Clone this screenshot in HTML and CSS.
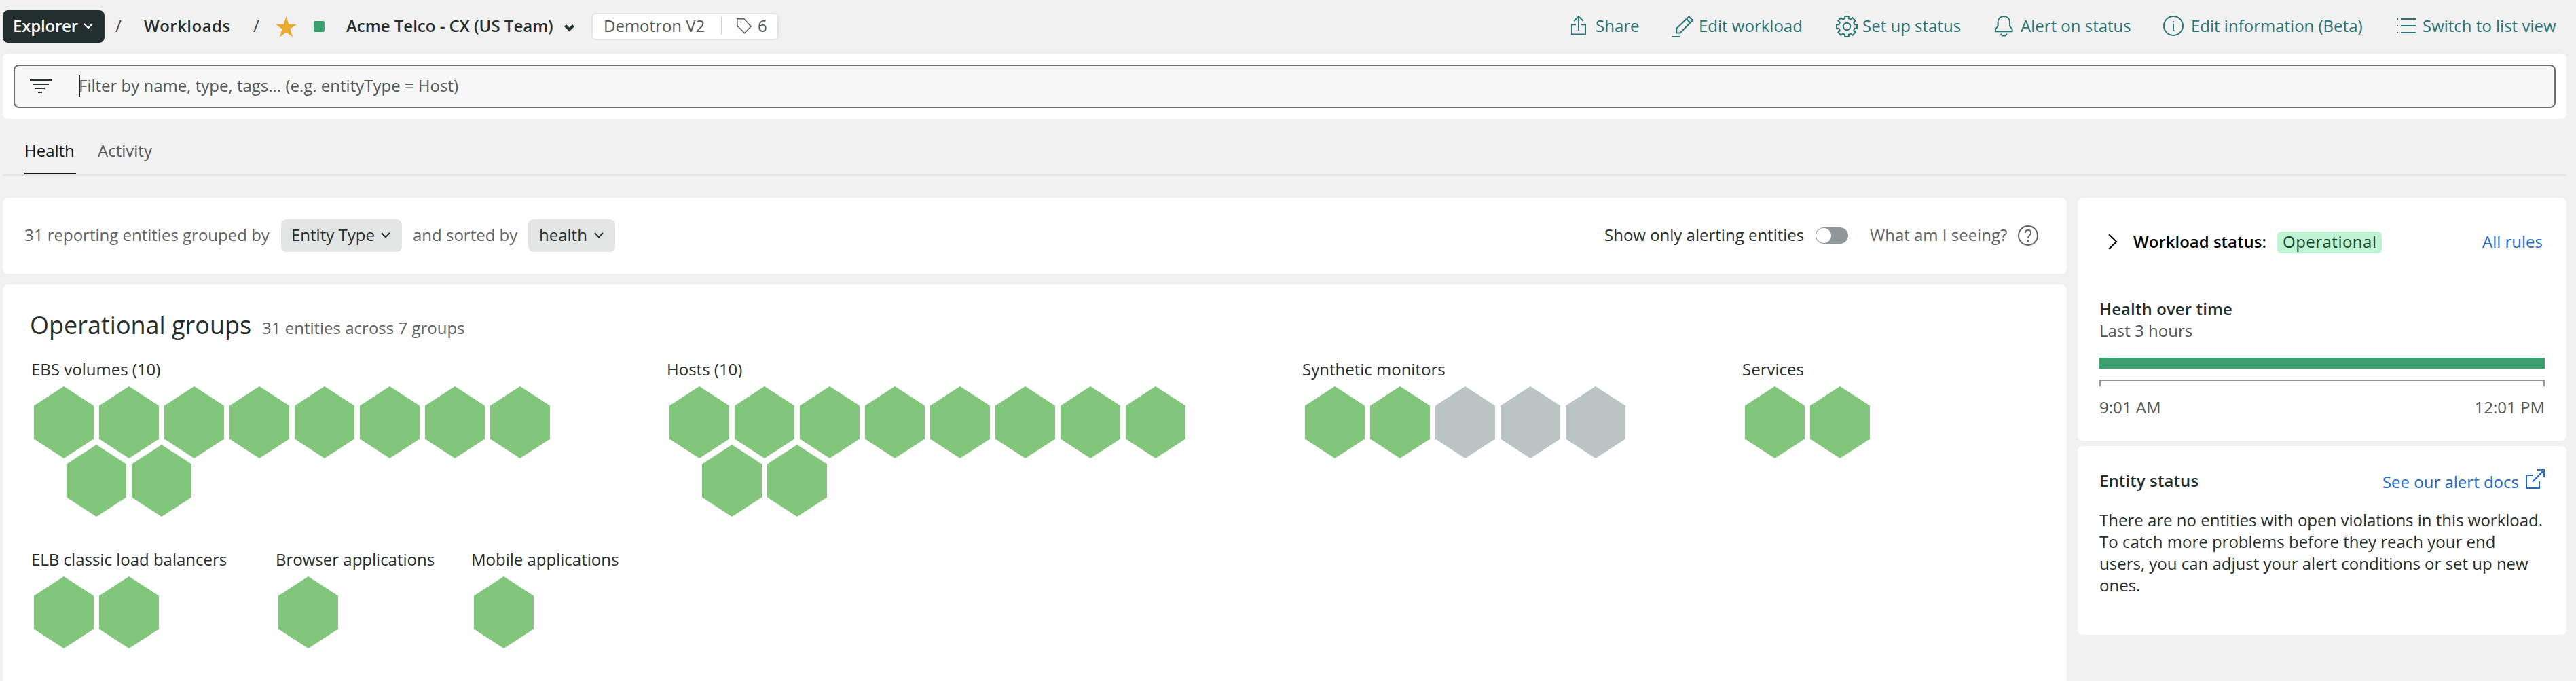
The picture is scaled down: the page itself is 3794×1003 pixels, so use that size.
FILE: index.html
```
<!DOCTYPE html>
<html lang="en">
<head>
<meta charset="utf-8">
<title>Workloads - Acme Telco - CX (US Team)</title>
<link rel="stylesheet" href="styles.css">
</head>
<body>
<svg class="defs" width="0" height="0" aria-hidden="true">
  <symbol id="hex" viewBox="0 0 88 106"><path d="M44 0 88 28.5V77.5L44 106 0 77.5V28.5Z" fill="currentColor"/></symbol>
</svg>

<header class="topbar">
  <button class="explorer"><span>Explorer</span><svg class="explorer-caret" width="14" height="9" viewBox="0 0 14 9"><path d="M1 1 7 7.2 13 1"/></svg></button>
  <span class="slash slash-first">/</span>
  <a class="crumb">Workloads</a>
  <span class="slash slash-second">/</span>
  <svg class="star" width="31" height="31" viewBox="0 0 31 31"><path d="M15.5 0 19.2 11.8H31L21.4 18.8 25.3 30.6 15.5 23.4 5.7 30.6 9.6 18.8 0 11.8H11.8Z" fill="#e9ab31"/></svg>
  <span class="status-dot"></span>
  <h1 class="title">Acme Telco - CX (US Team)</h1>
  <svg class="title-caret" width="15" height="12" viewBox="0 0 15 12"><path d="M1.5 2.5 7.5 8.5 13.5 2.5" fill="none" stroke="#262d2d" stroke-width="4.2"/></svg>
  <div class="meta">
    <span class="account">Demotron V2</span>
    <span class="tags"><svg width="22" height="24" viewBox="0 0 22 24" fill="none" stroke="#565b5b" stroke-width="1.5"><path d="M.9 1.8H11L21 13 11.5 22.8.9 12Z"/><path d="M5.5 6.5h1.6" stroke-width="1.6"/></svg>6</span>
  </div>
  <nav class="actions">
    <a class="action share"><svg width="22" height="30" viewBox="0 0 22 30"><path d="M7 13.2H1V27.5H21V13.2H15M11 22V1.5M4.2 8 11 1.2 17.8 8"/></svg>Share</a>
    <a class="action edit"><svg width="33" height="32" viewBox="0 0 33 32"><path d="M0 31H12.5M7.2 25.5V19L25.5 1.5 31 7 12.5 25.5ZM22 5 27.8 10.6"/></svg>Edit workload</a>
    <a class="action setup"><svg width="32" height="32" viewBox="0 0 32 32"><path d="M13.2 1H18.8V4.4L21.9 5.6 24.5 3.1 28.6 7.4 26.2 10 27.5 13.2H31V18.8H27.5L26.2 22 28.6 24.6 24.5 28.9 21.9 26.4 18.8 27.6V31H13.2V27.6L10.1 26.4 7.5 28.9 3.4 24.6 5.8 22 4.5 18.8H1V13.2H4.5L5.8 10 3.4 7.4 7.5 3.1 10.1 5.6 13.2 4.4Z"/><circle cx="16" cy="16" r="5.2"/></svg>Set up status</a>
    <a class="action alert"><svg width="27" height="31" viewBox="0 0 27 31"><path d="M1 23.2V20L4.6 15.5V9.8C4.6 4.4 8.4 1 13.3 1S22 4.4 22 9.8V15.5L25.6 20V23.2ZM8.8 26.6C9.6 28.6 11.2 29.6 13.3 29.6S17 28.6 17.8 26.6"/></svg>Alert on status</a>
    <a class="action info"><svg width="30" height="30" viewBox="0 0 30 30"><circle cx="15" cy="15" r="14"/><path d="M15 12V22M15 8V10.2"/></svg>Edit information (Beta)</a>
    <a class="action list"><svg width="28" height="22" viewBox="0 0 28 22"><path d="M6 1H28M6 11H28M6 21H28M0 1H2M0 11H2M0 21H2"/></svg>Switch to list view</a>
  </nav>
</header>

<section class="filter-card">
  <div class="filter-box">
    <svg width="32" height="20" viewBox="0 0 32 20"><path d="M0 1H32M4 7H28M8 13H22M12 19H18" stroke="#2a3434" stroke-width="2"/></svg>
    <span class="text-caret"></span>
    <span class="placeholder">Filter by name, type, tags... (e.g. entityType = Host)</span>
  </div>
</section>

<nav class="tabs">
  <a class="tab active">Health</a>
  <a class="tab">Activity</a>
</nav>

<main class="content">
  <div class="main-col">
    <section class="card toolbar">
      <span class="grouped">31 reporting entities grouped by</span>
      <button class="pill"><span>Entity Type</span><svg width="14" height="9" viewBox="0 0 14 9"><path d="M1 1 7 7.2 13 1"/></svg></button>
      <span class="sorted">and sorted by</span>
      <button class="pill pill-sort"><span>health</span><svg width="14" height="9" viewBox="0 0 14 9"><path d="M1 1 7 7.2 13 1"/></svg></button>
      <div class="toolbar-right">
        <span class="only">Show only alerting entities</span>
        <span class="toggle"><i></i></span>
        <span class="what">What am I seeing?</span>
        <svg width="30" height="30" viewBox="0 0 30 30" fill="none" stroke="#5e6363" stroke-width="2"><circle cx="15" cy="15" r="14"/><path d="M10.8 11.2C10.8 8.6 12.5 7 15 7S19.2 8.6 19.2 11C19.2 14.4 15 14.4 15 19M15 21.6V24"/></svg>
      </div>
    </section>

    <section class="card groups-card">
      <div class="groups-head"><h2>Operational groups</h2><span>31 entities across 7 groups</span></div>
      <div class="group-row">
        <div class="group w-xl">
          <h3>EBS volumes (10)</h3>
          <div class="hexes"><svg><use href="#hex"/></svg><svg><use href="#hex"/></svg><svg><use href="#hex"/></svg><svg><use href="#hex"/></svg><svg><use href="#hex"/></svg><svg><use href="#hex"/></svg><svg><use href="#hex"/></svg><svg><use href="#hex"/></svg></div>
          <div class="hexes shifted"><svg><use href="#hex"/></svg><svg><use href="#hex"/></svg></div>
        </div>
        <div class="group w-xl">
          <h3>Hosts (10)</h3>
          <div class="hexes"><svg><use href="#hex"/></svg><svg><use href="#hex"/></svg><svg><use href="#hex"/></svg><svg><use href="#hex"/></svg><svg><use href="#hex"/></svg><svg><use href="#hex"/></svg><svg><use href="#hex"/></svg><svg><use href="#hex"/></svg></div>
          <div class="hexes shifted"><svg><use href="#hex"/></svg><svg><use href="#hex"/></svg></div>
        </div>
        <div class="group w-lg">
          <h3>Synthetic monitors</h3>
          <div class="hexes"><svg><use href="#hex"/></svg><svg><use href="#hex"/></svg><svg class="off"><use href="#hex"/></svg><svg class="off"><use href="#hex"/></svg><svg class="off"><use href="#hex"/></svg></div>
        </div>
        <div class="group">
          <h3>Services</h3>
          <div class="hexes"><svg><use href="#hex"/></svg><svg><use href="#hex"/></svg></div>
        </div>
      </div>
      <div class="group-row group-row-last">
        <div class="group w-md">
          <h3>ELB classic load balancers</h3>
          <div class="hexes"><svg><use href="#hex"/></svg><svg><use href="#hex"/></svg></div>
        </div>
        <div class="group w-sm">
          <h3>Browser applications</h3>
          <div class="hexes"><svg><use href="#hex"/></svg></div>
        </div>
        <div class="group">
          <h3>Mobile applications</h3>
          <div class="hexes"><svg><use href="#hex"/></svg></div>
        </div>
      </div>
    </section>
  </div>

  <aside class="side">
    <section class="card status-card">
      <div class="status-row">
        <svg width="14" height="24" viewBox="0 0 14 24"><path d="M1.2 1.2 12.2 12 1.2 22.8" fill="none" stroke="#000" stroke-width="2"/></svg>
        <strong>Workload status:</strong>
        <span class="badge">Operational</span>
        <a class="link">All rules</a>
      </div>
      <h4>Health over time</h4>
      <p class="range">Last 3 hours</p>
      <div class="health-bar"></div>
      <div class="axis"></div>
      <div class="axis-labels"><span>9:01 AM</span><span>12:01 PM</span></div>
    </section>
    <section class="card entity-card">
      <div class="entity-head">
        <h4>Entity status</h4>
        <a class="link docs">See our alert docs<svg width="28" height="29" viewBox="0 0 28 29" fill="none" stroke="#1e69c4" stroke-width="2"><path d="M10 9H1V28H20V18M10 18.5 27 1.2M17 1H27V12"/></svg></a>
      </div>
      <p class="note">There are no entities with open violations in this workload.<br>To catch more problems before they reach your end<br>users, you can adjust your alert conditions or set up new<br>ones.</p>
    </section>
  </aside>
</main>
</body>
</html>
```
FILE: styles.css
```
* { box-sizing: border-box; }
body {
  margin: 0;
  background: #f1f1f1;
  color: #262d2d;
  font: 24px/32px "Open Sans", "Noto Sans", sans-serif;
  white-space: nowrap;
}
h1, h2, h3, h4, p { margin: 0; font-size: 24px; font-weight: 400; }
button { border: 0; margin: 0; font: inherit; color: inherit; text-align: left; }
svg { display: block; flex: none; }
.defs { display: none; }
.card { background: #fff; border-radius: 8px; }

/* Header */
.topbar { display: flex; align-items: center; height: 79px; padding: 0 14px 3px 4px; }
.topbar > * { flex: none; }
.explorer {
  display: flex; align-items: center; width: 150px; height: 48px; margin-top: 2px;
  padding: 0 17px 2px 15px; border-radius: 8px; background: #232e2e; color: #fff;
  font-weight: 600; letter-spacing: -.2px; justify-content: space-between;
}
.explorer-caret { fill: none; stroke: #fff; stroke-width: 2; }
.slash { color: #3a4141; }
.slash-first { width: 42px; margin-left: 16px; }
.crumb { width: 161px; font-weight: 600; letter-spacing: .48px; }
.slash-second { width: 33px; }
.star { margin-top: 3px; }
.status-dot { width: 16px; height: 16px; margin: 2px 32px 0 25px; border-radius: 2px; background: #3aa06f; }
.title { width: 321px; font-weight: 600; }
.title-caret { margin-top: 6px; }
.meta {
  display: flex; align-items: center; width: 276px; height: 40px; margin: 2px 0 0 25px;
  padding-bottom: 2px; border: 2px solid #e3e5e5; border-radius: 6px; background: #fff; color: #535858;
}
.account { width: 189px; padding-left: 16px; }
.tags { display: flex; align-items: center; height: 26px; padding-left: 21px; border-left: 2px solid #cfd2d2; gap: 9px; }
.actions { display: flex; margin-left: auto; width: 1466px; color: #2a7375; }
.action { display: flex; align-items: center; }
.action svg { fill: none; stroke: #2a7375; stroke-width: 2; }
.share { width: 148px; } .share svg { margin-right: 14px; }
.edit { width: 242px; } .edit svg { margin-right: 7px; margin-top: 2px; }
.setup { width: 234px; } .setup svg { margin-right: 7px; margin-top: 2px; }
.alert { width: 248px; } .alert svg { margin-right: 11px; }
.info { width: 344px; } .info svg { margin-right: 11px; }
.list svg { margin-right: 10px; }

/* Filter */
.filter-card { width: 3776px; height: 96px; margin-left: 4px; padding: 16px; background: #fff; border-radius: 8px; }
.filter-box {
  display: flex; align-items: center; height: 64px; padding-left: 22px;
  border: 2px solid #6a6c6d; border-radius: 8px; background: #f7f7f7;
}
.text-caret { width: 2px; height: 32px; margin-left: 40px; background: #1c2424; }
.placeholder { margin-left: -2px; padding-bottom: 2px; color: #535858; }

/* Tabs */
.tabs { display: flex; gap: 32px; width: 3776px; height: 84px; margin-left: 4px; padding: 31px 0 0 32px; border-bottom: 2px solid #e5e6e6; color: #535858; }
.tab { height: 51px; }
.active { width: 76px; color: #141919; border-bottom: 2px solid #141919; }

/* Page body */
.content { display: flex; gap: 16px; padding: 32px 0 0 4px; }
.main-col { display: flex; flex-direction: column; gap: 16px; width: 3040px; }
.toolbar { display: flex; align-items: center; height: 112px; padding: 0 42px 0 32px; color: #5e6363; }
.grouped { width: 378px; padding-bottom: 3px; }
.pill {
  display: flex; align-items: center; justify-content: space-between; width: 178px; height: 48px;
  padding: 0 17px 3px 15px; border-radius: 8px; background: #e3e5e4; color: #262d2d;
}
.pill svg { margin-top: 2px; fill: none; stroke: #262d2d; stroke-width: 2; }
.pill-sort { width: 128px; padding-left: 16px; }
.sorted { width: 186px; padding: 0 0 3px 16px; }
.toolbar-right { display: flex; align-items: center; margin-left: auto; }
.only { width: 311px; color: #262d2d; padding-bottom: 3px; }
.toggle { width: 48px; height: 24px; padding: 1px; margin-right: 32px; border-radius: 12px; background: #8f9898; }
.toggle i { display: block; width: 22px; height: 22px; border-radius: 50%; background: #fff; }
.what { width: 218px; padding-bottom: 3px; }

.groups-card { height: 584px; padding: 36px 0 0 41px; border-radius: 8px 8px 0 0; }
.groups-head { display: flex; align-items: baseline; height: 48px; margin-bottom: 25px; }
.groups-head h2 { width: 342px; margin-left: -1px; font-size: 36px; line-height: 48px; }
.groups-head span { color: #5e6363; }
.group-row { display: flex; height: 280px; }
.group-row-last { height: 147px; }
.group h3 { padding-left: 1px; }
.w-xl { width: 936px; }
.w-lg { width: 648px; }
.w-md { width: 360px; }
.w-sm { width: 288px; }
.hexes { display: flex; gap: 8px; padding: 9px 0 0 5px; }
.hexes svg { width: 88px; height: 106px; color: #82c67b; }
.hexes .off { color: #b9c4c3; }
.shifted { padding-left: 53px; margin-top: -29px; }

/* Right column */
.side { display: flex; flex-direction: column; gap: 8px; width: 720px; }
.status-card { height: 358px; padding: 48px 32px 0; }
.status-row { display: flex; align-items: center; height: 34px; padding: 0 3px 0 13px; margin-bottom: 66px; }
.status-row strong { width: 212px; margin-left: 23px; font-weight: 600; color: #000; }
.badge { height: 32px; padding: 0 8px; border-radius: 6px; background: #bff3d4; color: #12482b; letter-spacing: .48px; margin-top: 2px; line-height: 30px; }
.link { color: #1e69c4; }
.status-row .link { margin-left: auto; }
.side h4 { font-weight: 600; letter-spacing: .1px; }
.range { color: #535858; }
.health-bar { height: 16px; margin-top: 24px; background: #3aa06f; }
.axis { height: 10px; margin-top: 16px; border: 2px solid #939797; border-bottom: 0; }
.axis-labels { display: flex; justify-content: space-between; margin-top: 15px; color: #535858; }
.entity-card { height: 278px; padding: 35px 32px 0; }
.entity-head { display: flex; justify-content: space-between; height: 58px; }
.docs { display: flex; gap: 10px; padding-top: 2px; }
.docs svg { margin-top: -3px; }
```
